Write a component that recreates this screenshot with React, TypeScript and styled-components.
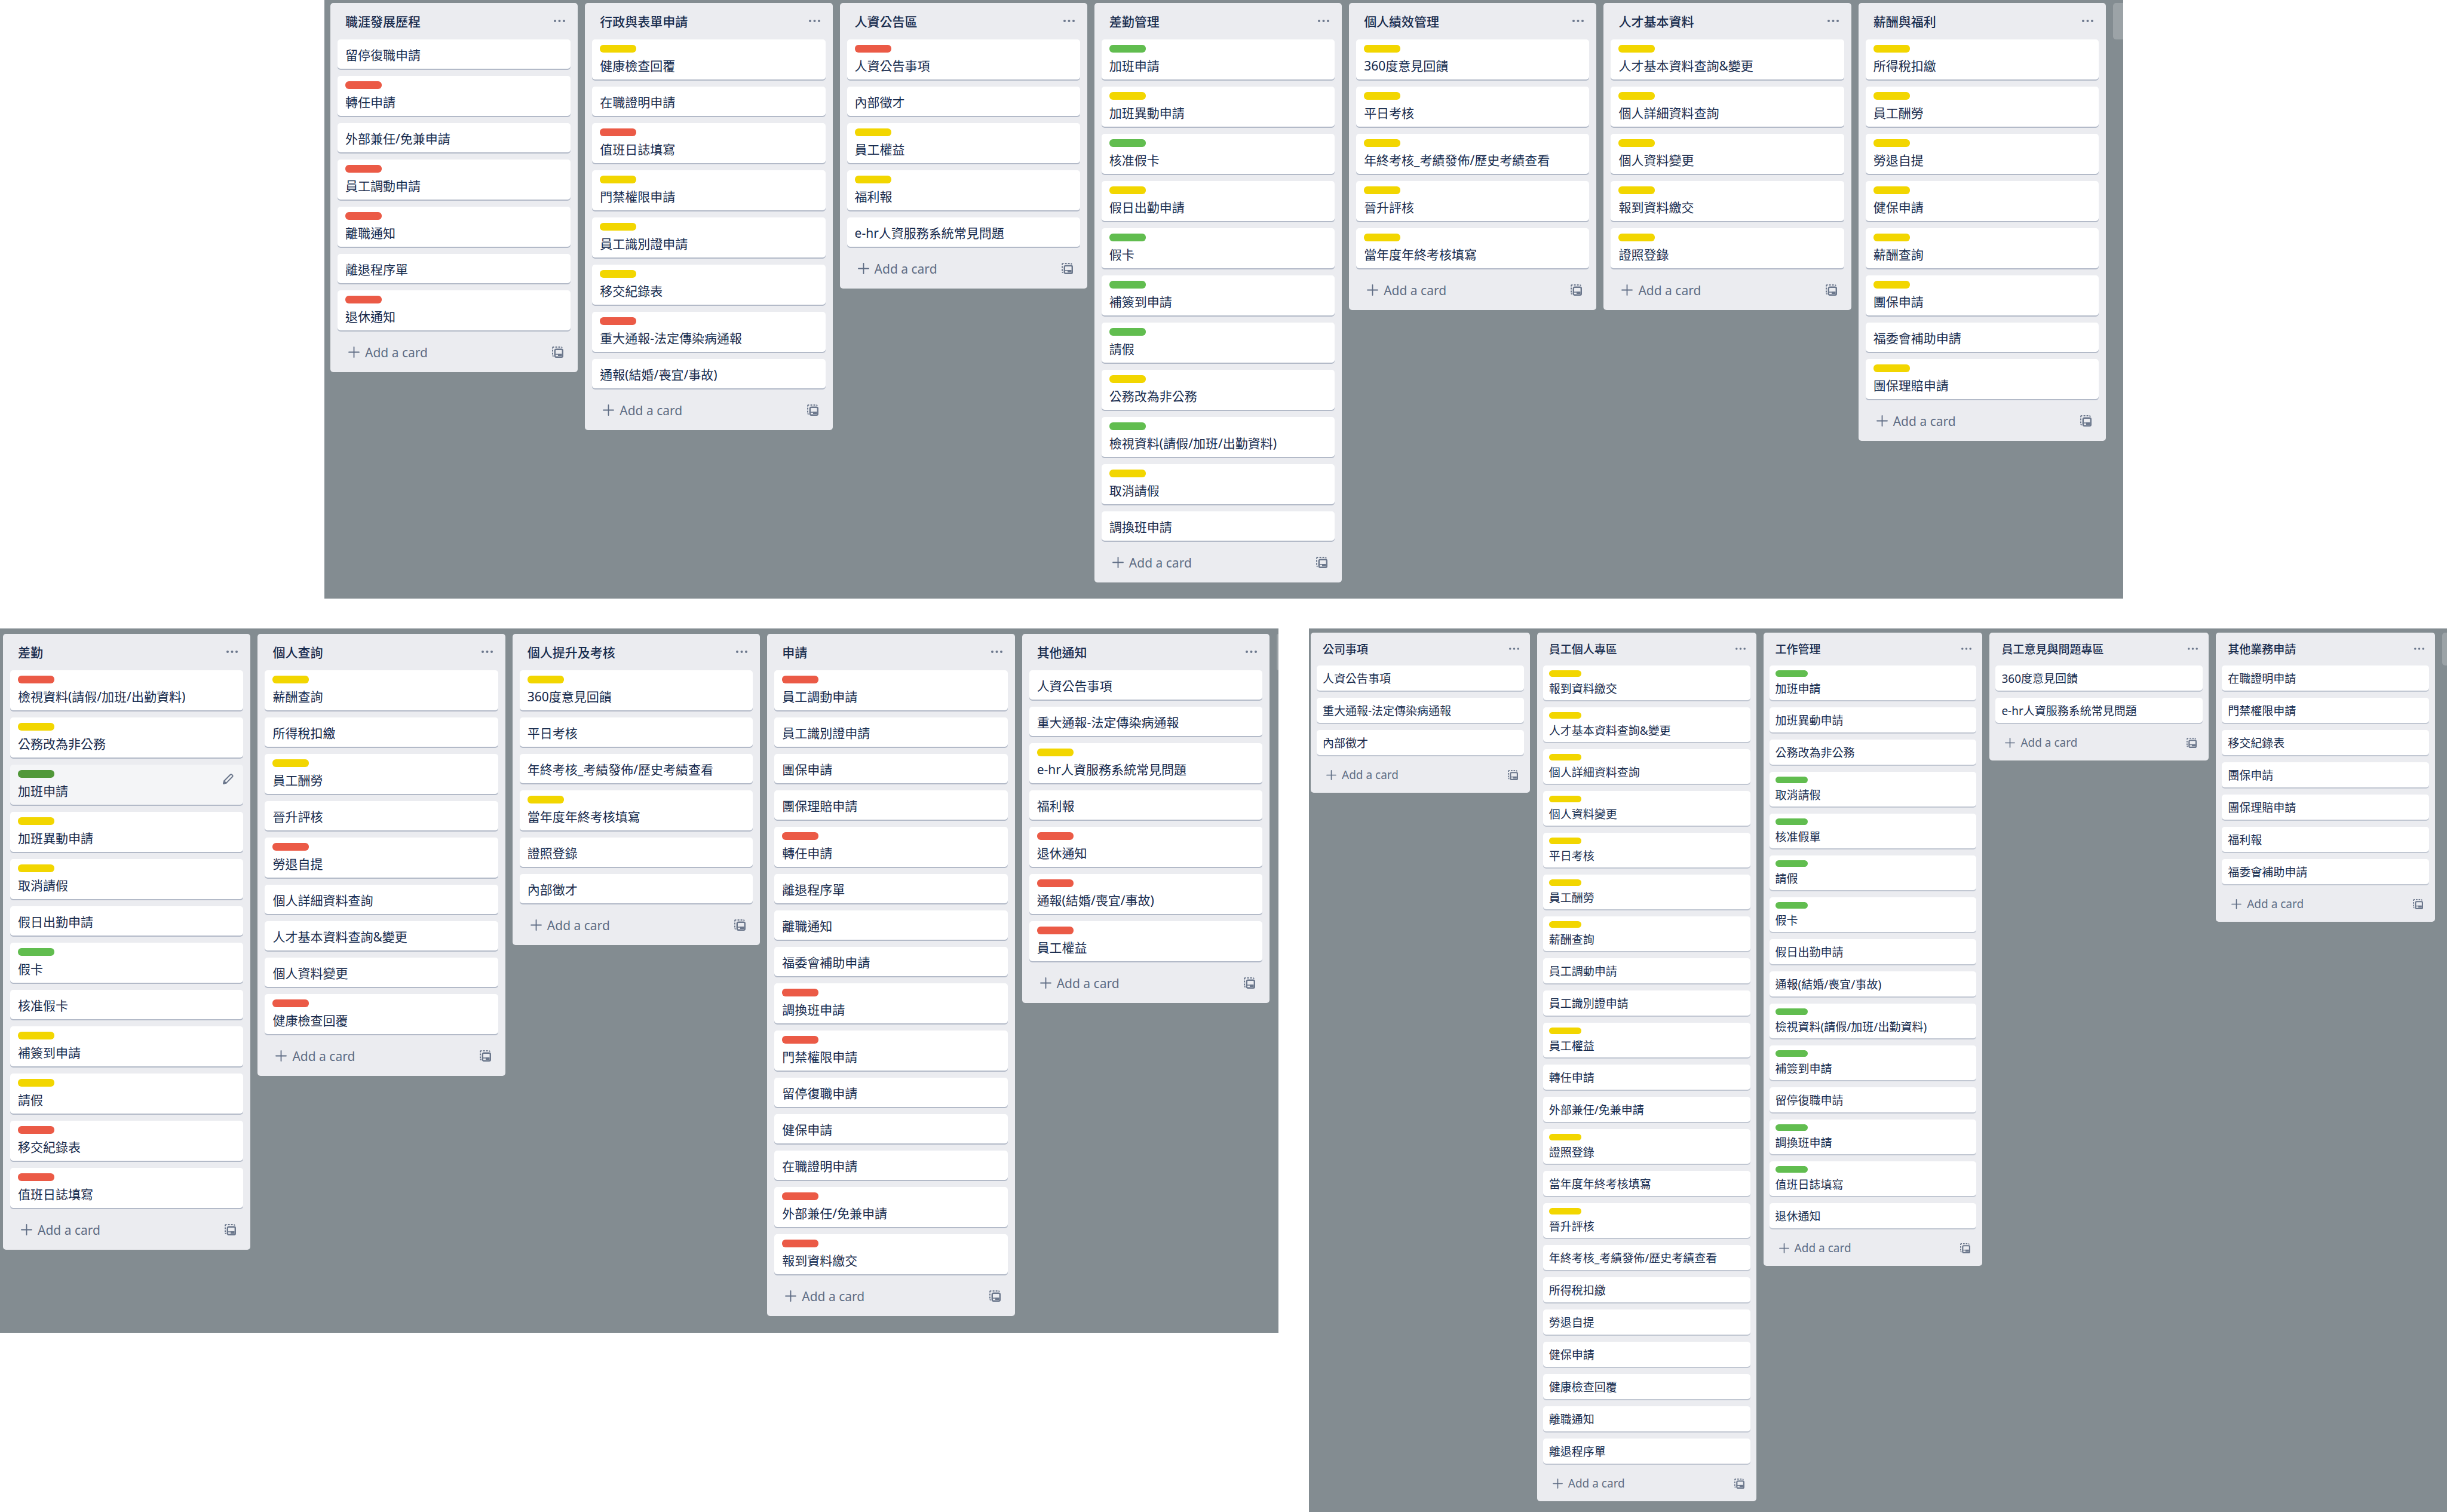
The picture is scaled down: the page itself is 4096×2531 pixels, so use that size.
import React from "react";
import styled, { createGlobalStyle, ThemeProvider } from "styled-components";

type Tone = "red" | "yellow" | "green" | "greenDark";

interface CardData {
  text: string;
  tone?: Tone;
  active?: boolean;
}

interface ListData {
  title: string;
  cards: CardData[];
}

const tones: Record<Tone, string> = {
  red: "#eb5a46",
  yellow: "#f2d600",
  green: "#61bd4f",
  greenDark: "#519839",
};

const toneKeys: Record<string, Tone> = { r: "red", y: "yellow", g: "green", G: "greenDark" };

/* "r:text" is a card with a red label, ":text" a card without one. */
const list = (title: string, ...cards: string[]): ListData => ({
  title,
  cards: cards.map((entry) => {
    const split = entry.indexOf(":");
    const key = entry.slice(0, split);
    return { text: entry.slice(split + 1), tone: toneKeys[key], active: key === "G" };
  }),
});

const careerBoard: ListData[] = [
  list("職涯發展歷程", ":留停復職申請", "r:轉任申請", ":外部兼任/免兼申請", "r:員工調動申請", "r:離職通知", ":離退程序單", "r:退休通知"),
  list("行政與表單申請", "y:健康檢查回覆", ":在職證明申請", "r:值班日誌填寫", "y:門禁權限申請", "y:員工識別證申請", "y:移交紀錄表", "r:重大通報-法定傳染病通報", ":通報(結婚/喪宜/事故)"),
  list("人資公告區", "r:人資公告事項", ":內部徵才", "y:員工權益", "y:福利報", ":e-hr人資服務系統常見問題"),
  list("差勤管理", "g:加班申請", "y:加班異動申請", "g:核准假卡", "y:假日出勤申請", "g:假卡", "g:補簽到申請", "g:請假", "y:公務改為非公務", "g:檢視資料(請假/加班/出勤資料)", "y:取消請假", ":調換班申請"),
  list("個人績效管理", "y:360度意見回饋", "y:平日考核", "y:年終考核_考績發佈/歷史考績查看", "y:晉升評核", "y:當年度年終考核填寫"),
  list("人才基本資料", "y:人才基本資料查詢&變更", "y:個人詳細資料查詢", "y:個人資料變更", "y:報到資料繳交", "y:證照登錄"),
  list("薪酬與福利", "y:所得稅扣繳", "y:員工酬勞", "y:勞退自提", "y:健保申請", "y:薪酬查詢", "y:團保申請", ":福委會補助申請", "y:團保理賠申請"),
];

const attendanceBoard: ListData[] = [
  list("差勤", "r:檢視資料(請假/加班/出勤資料)", "y:公務改為非公務", "G:加班申請", "y:加班異動申請", "y:取消請假", ":假日出勤申請", "g:假卡", ":核准假卡", "y:補簽到申請", "y:請假", "r:移交紀錄表", "r:值班日誌填寫"),
  list("個人查詢", "y:薪酬查詢", ":所得稅扣繳", "y:員工酬勞", ":晉升評核", "r:勞退自提", ":個人詳細資料查詢", ":人才基本資料查詢&變更", ":個人資料變更", "r:健康檢查回覆"),
  list("個人提升及考核", "y:360度意見回饋", ":平日考核", ":年終考核_考績發佈/歷史考績查看", "y:當年度年終考核填寫", ":證照登錄", ":內部徵才"),
  list("申請", "r:員工調動申請", ":員工識別證申請", ":團保申請", ":團保理賠申請", "r:轉任申請", ":離退程序單", ":離職通知", ":福委會補助申請", "r:調換班申請", "r:門禁權限申請", ":留停復職申請", ":健保申請", ":在職證明申請", "r:外部兼任/免兼申請", "r:報到資料繳交"),
  list("其他通知", ":人資公告事項", ":重大通報-法定傳染病通報", "y:e-hr人資服務系統常見問題", ":福利報", "r:退休通知", "r:通報(結婚/喪宜/事故)", "r:員工權益"),
];

const companyBoard: ListData[] = [
  list("公司事項", ":人資公告事項", ":重大通報-法定傳染病通報", ":內部徵才"),
  list("員工個人專區", "y:報到資料繳交", "y:人才基本資料查詢&變更", "y:個人詳細資料查詢", "y:個人資料變更", "y:平日考核", "y:員工酬勞", "y:薪酬查詢", ":員工調動申請", ":員工識別證申請", "y:員工權益", ":轉任申請", ":外部兼任/免兼申請", "y:證照登錄", ":當年度年終考核填寫", "y:晉升評核", ":年終考核_考績發佈/歷史考績查看", ":所得稅扣繳", ":勞退自提", ":健保申請", ":健康檢查回覆", ":離職通知", ":離退程序單"),
  list("工作管理", "g:加班申請", ":加班異動申請", ":公務改為非公務", "g:取消請假", "g:核准假單", "g:請假", "g:假卡", ":假日出勤申請", ":通報(結婚/喪宜/事故)", "g:檢視資料(請假/加班/出勤資料)", "g:補簽到申請", ":留停復職申請", "g:調換班申請", "g:值班日誌填寫", ":退休通知"),
  list("員工意見與問題專區", ":360度意見回饋", ":e-hr人資服務系統常見問題"),
  list("其他業務申請", ":在職證明申請", ":門禁權限申請", ":移交紀錄表", ":團保申請", ":團保理賠申請", ":福利報", ":福委會補助申請"),
];

const regular = {
  font: 21, header: 61, footer: 70, inset: 12, cardX: 13, cardPad: "10px 13px 7px", labelledPad: "9px 13px 7px",
  line: 32, labelGap: 6, labelW: 61, labelH: 13, shadow: "#b3bac8", icon: 19, menuEnd: 21, tplEnd: 24, addStart: 30,
};

const compact: typeof regular = {
  font: 19, header: 55, footer: 63, inset: 10, cardX: 10, cardPad: "8px 10px 6px", labelledPad: "8px 10px 5px",
  line: 28, labelGap: 6, labelW: 54, labelH: 11, shadow: "#c1c7d2", icon: 17, menuEnd: 18, tplEnd: 20, addStart: 26,
};

type Sizes = typeof regular;

const GlobalStyle = createGlobalStyle`
  *, *::before, *::after { box-sizing: border-box; }
  body { margin: 0; background: #fff; }
  button { font: inherit; color: inherit; background: none; border: 0; padding: 0; cursor: pointer; }
`;

const Page = styled.main`
  display: flex;
  flex-direction: column;
  gap: 50px;
  min-height: 100vh;
  font-family: "Noto Sans", "Noto Sans CJK TC", sans-serif;
  color: #172b4d;
`;

const TopRow = styled.div`
  display: grid;
  grid-template-columns: 543fr 3011fr 542fr;
`;

const BottomRow = styled.div`
  flex: 1;
  display: grid;
  grid-template-columns: 2140fr 51fr 1905fr;
`;

const BoardRoot = styled.section<{ $pad: string; $column: number; $fill?: boolean }>`
  grid-column: ${(p) => p.$column};
  align-self: ${(p) => (p.$fill ? "stretch" : "start")};
  display: flex;
  align-items: flex-start;
  gap: 12px;
  padding: ${(p) => p.$pad};
  background: #838c91;
  overflow: hidden;
`;

const ListRoot = styled.section`
  flex: 1 1 0;
  min-width: 0;
  background: #ebecf0;
  border-radius: 5px;
  font-size: ${(p) => (p.theme as Sizes).font}px;
`;

const ListHeader = styled.header`
  display: flex;
  align-items: center;
  justify-content: space-between;
  height: ${(p) => (p.theme as Sizes).header}px;
  padding: 0 ${(p) => (p.theme as Sizes).menuEnd}px 0 ${(p) => (p.theme as Sizes).inset + (p.theme as Sizes).cardX}px;
`;

const ListTitle = styled.h2`
  margin: 0;
  font-size: inherit;
  font-weight: 500;
  line-height: 32px;
  white-space: nowrap;
`;

const IconButton = styled.button`
  display: flex;
  color: #6b778c;
`;

const Cards = styled.ul`
  display: flex;
  flex-direction: column;
  gap: 12px;
  margin: 0;
  padding: 0 ${(p) => (p.theme as Sizes).inset}px;
  list-style: none;
`;

const CardItem = styled.li`
  position: relative;
`;

const CardLink = styled.a<{ $active?: boolean; $labelled: boolean }>`
  display: block;
  padding: ${(p) => (p.$labelled ? (p.theme as Sizes).labelledPad : (p.theme as Sizes).cardPad)};
  border-radius: 5px;
  background: ${(p) => (p.$active ? "#f4f5f7" : "#fff")};
  box-shadow: 0 2px 0 ${(p) => (p.theme as Sizes).shadow};
  color: inherit;
  text-decoration: none;
  line-height: ${(p) => (p.theme as Sizes).line}px;
  white-space: nowrap;
`;

const Label = styled.span<{ $tone: Tone }>`
  display: block;
  width: ${(p) => (p.theme as Sizes).labelW}px;
  height: ${(p) => (p.theme as Sizes).labelH}px;
  margin-bottom: ${(p) => (p.theme as Sizes).labelGap}px;
  border-radius: 6px;
  background: ${(p) => tones[p.$tone]};
`;

const CardText = styled.span`
  display: block;
`;

const EditButton = styled(IconButton)`
  position: absolute;
  top: 15px;
  right: 16px;
`;

const ListFooter = styled.footer`
  display: flex;
  align-items: center;
  justify-content: space-between;
  height: ${(p) => (p.theme as Sizes).footer}px;
  padding: 3px ${(p) => (p.theme as Sizes).tplEnd}px 0 ${(p) => (p.theme as Sizes).addStart}px;
  color: #5e6c84;
`;

const AddButton = styled.button`
  display: flex;
  align-items: center;
  gap: 9px;
  white-space: nowrap;
`;

const NextList = styled.button<{ $width: number }>`
  flex: none;
  width: ${(p) => p.$width}px;
  height: ${(p) => (p.theme as Sizes).header}px;
  border-radius: 5px 0 0 5px;
  background: #9ca3a7;
`;

const DotsIcon = ({ size }: { size: number }) => (
  <svg width={size} height={size} viewBox="0 0 19 19" fill="currentColor" aria-hidden="true">
    <circle cx="2" cy="9" r="2" />
    <circle cx="9.5" cy="9" r="2" />
    <circle cx="17" cy="9" r="2" />
  </svg>
);

const PlusIcon = ({ size }: { size: number }) => (
  <svg width={size} height={size} viewBox="0 0 19 19" stroke="currentColor" strokeWidth="1.8" strokeLinecap="round" aria-hidden="true">
    <path d="M9.5 1v17M1 9.5h17" />
  </svg>
);

const TemplateIcon = ({ size }: { size: number }) => (
  <svg width={size} height={size} viewBox="0 0 19 19" fill="none" stroke="currentColor" aria-hidden="true">
    <path d="M1 3.4V2.4Q1 1 2.4 1h1M5.6 1h3M10.6 1h3M15.4 1q1.2.2 1.4 1.6M1 5.6v3M1 10.6v3M1 15.2q.3.8 1.6 1" strokeWidth="2" />
    <rect x="4.8" y="4.8" width="13" height="13" rx="2" strokeWidth="2.4" />
    <path d="M5 13h5.5" strokeWidth="1.6" />
    <rect x="10" y="12" width="6.6" height="4" fill="currentColor" stroke="none" />
  </svg>
);

const PencilIcon = () => (
  <svg width="18" height="18" viewBox="0 0 18 18" fill="none" stroke="currentColor" strokeWidth="2" strokeLinejoin="round" aria-hidden="true">
    <path d="M1.2 16.8l1-4.6L12.6 1.8q1.2-1 2.4 0l1 1q1.2 1.2 0 2.4L5.8 15.6z" />
    <path d="M1.2 16.8l1-4.2 3.2 3.2z" fill="currentColor" />
  </svg>
);

const List = ({ data, sizes }: { data: ListData; sizes: Sizes }) => (
  <ListRoot>
    <ListHeader>
      <ListTitle>{data.title}</ListTitle>
      <IconButton type="button" aria-label="List actions">
        <DotsIcon size={sizes.icon} />
      </IconButton>
    </ListHeader>
    <Cards>
      {data.cards.map((card) => (
        <CardItem key={card.text}>
          <CardLink href="#" $active={card.active} $labelled={Boolean(card.tone)}>
            {card.tone && <Label $tone={card.tone} />}
            <CardText>{card.text}</CardText>
          </CardLink>
          {card.active && (
            <EditButton type="button" aria-label="Edit card">
              <PencilIcon />
            </EditButton>
          )}
        </CardItem>
      ))}
    </Cards>
    <ListFooter>
      <AddButton type="button">
        <PlusIcon size={sizes.icon} />
        Add a card
      </AddButton>
      <IconButton type="button" aria-label="Create from template">
        <TemplateIcon size={sizes.icon} />
      </IconButton>
    </ListFooter>
  </ListRoot>
);

interface BoardProps {
  lists: ListData[];
  sizes: Sizes;
  pad: string;
  column: number;
  peek: number;
  fill?: boolean;
}

const Board = ({ lists, sizes, pad, column, peek, fill }: BoardProps) => (
  <ThemeProvider theme={sizes}>
    <BoardRoot $pad={pad} $column={column} $fill={fill}>
      {lists.map((data) => (
        <List key={data.title} data={data} sizes={sizes} />
      ))}
      <NextList type="button" aria-label="Add another list" $width={peek} />
    </BoardRoot>
  </ThemeProvider>
);

export default function App() {
  return (
    <>
      <GlobalStyle />
      <Page>
        <TopRow>
          <Board lists={careerBoard} sizes={regular} pad="5px 0 27px 10px" column={2} peek={17} />
        </TopRow>
        <BottomRow>
          <Board lists={attendanceBoard} sizes={regular} pad="9px 0 28px 5px" column={1} peek={3} />
          <Board lists={companyBoard} sizes={compact} pad="7px 0 15px 3px" column={3} peek={8} fill />
        </BottomRow>
      </Page>
    </>
  );
}
